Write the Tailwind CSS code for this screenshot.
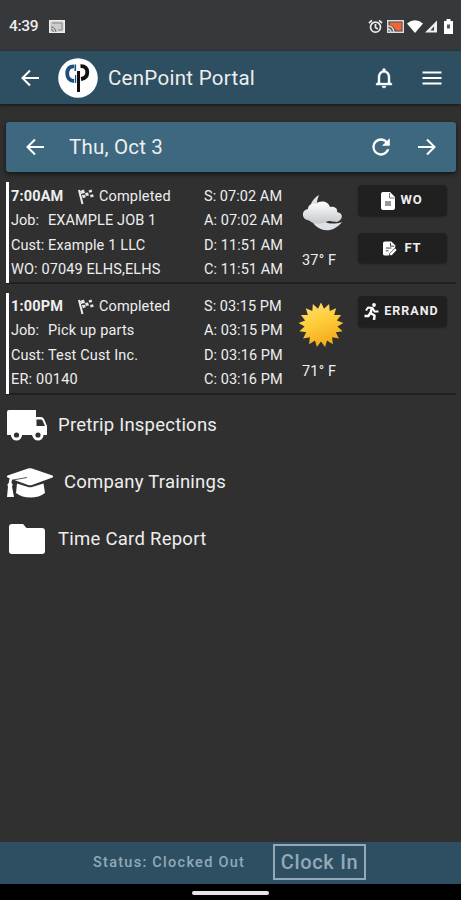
<!DOCTYPE html>
<html lang="en">

<head>
    <meta charset="UTF-8">
    <meta name="viewport" content="width=device-width, initial-scale=1.0">
    <title>CenPoint Portal</title>
    <script src="https://cdn.jsdelivr.net/npm/@tailwindcss/browser@4"></script>
</head>

<body class="bg-[#303030] font-['Roboto',sans-serif] text-[#eeeeee] h-screen flex flex-col overflow-hidden whitespace-nowrap">
    <!-- Status bar -->
    <div class="h-[51px] shrink-0 bg-[#37383c] flex items-center justify-between pl-[9px] pr-2">
        <div class="flex items-center gap-[11px] text-[15.5px] font-medium pt-[2px]">
            <span class="w-[29px] tracking-[-0.3px]">4:39</span>
            <svg class="w-4 h-[13px]" viewBox="0 0 16 13">
                <rect x=".7" y=".7" width="14.6" height="11.6" fill="#ccc" stroke="#eee" stroke-width="1.4" />
                <path d="M2 7q4 0 5 5M2 9.5q2 0 2.500 2.500" fill="none" stroke="#666" />
                <path d="M3 3h10v7H9" fill="none" stroke="#888" />
            </svg>
        </div>
        <div class="flex items-center pt-px">
            <svg class="w-[15px] h-[15px] mr-1" viewBox="0 0 15 15" fill="none" stroke="#eee" stroke-width="1.700">
                <circle cx="7.500" cy="8.200" r="5" />
                <path d="M7.500 5v3.600l2.300 1.300M1 4l3-2.600M14 4l-3-2.600" />
            </svg>
            <svg class="w-[17px] h-[13px] mr-[3px]" viewBox="0 0 17 13">
                <rect x=".7" y=".7" width="15.600" height="11.600" fill="#555" stroke="#ddd" stroke-width="1.400" />
                <path d="M3 2.500h11.500v8H9Q7 6 3 5z" fill="#f26334" />
                <path d="M1 6q5 0 6 6M1 9q2.500 0 3 3" fill="none" stroke="#ddd" stroke-width="1.400" />
            </svg>
            <svg class="w-4 h-[13px] mr-px" viewBox="0 0 16 13">
                <path d="M0 3.500Q8-3 16 3.500L8 13z" fill="#fff" />
            </svg>
            <svg class="w-[14px] h-[13px] mr-[6px]" viewBox="0 0 14 13">
                <path d="M1 12.500L13 .5v12z" fill="#eee" />
                <path d="M6.500 10.500l3.500-4v4z" fill="#37383c" />
            </svg>
            <svg class="w-[9px] h-[15px]" viewBox="0 0 9 15">
                <path d="M2.500 0h4v2H9v13H0V2h2.500z" fill="#fff" />
                <path d="M3 5.500h3v4H3z" fill="#55565a" />
            </svg>
        </div>
    </div>

    <!-- App header -->
    <header class="h-[53px] shrink-0 bg-[#2d4f61] flex items-center pl-[18px] pr-[17px] shadow-[0_1px_3px_rgba(0,0,0,.6)]">
        <svg class="w-6 h-6" viewBox="0 0 24 24" fill="none" stroke="#fff" stroke-width="2">
            <path d="M21 12H5M12 4.500L4.500 12l7.500 7.500" />
        </svg>
        <svg class="w-10 h-10 ml-[16px]" viewBox="0 0 40 40" fill="none">
            <circle cx="20" cy="20" r="19.800" fill="#fff" />
            <path d="M16 8.300C11 8.300 9.200 11.500 9.200 15.500s2.300 7.300 7 7.500" stroke="#1f4f7a" stroke-width="3.800" />
            <path d="M17.300 6.500v6.500" stroke="#1f4f7a" stroke-width="1.600" />
            <path d="M22.500 8.200c5-.2 6.800 2.500 6.800 5.800 0 4-2.300 6.500-6.300 7" stroke="#111" stroke-width="3.800" />
            <path d="M20.500 13v21" stroke="#111" stroke-width="3" />
            <path d="M17.600 17v8" stroke="#1f4f7a" stroke-width="1.200" />
        </svg>
        <h1 class="ml-[10px] mt-px text-[20.5px] leading-none tracking-[0.28px]">CenPoint Portal</h1>
        <svg class="w-6 h-6 ml-auto" viewBox="0 0 24 24" fill="#fff" stroke="#fff" stroke-width=".4">
            <path d="M12 22c1.100 0 2-.9 2-2h-4c0 1.100.9 2 2 2zm6-6v-5c0-3.070-1.630-5.640-4.500-6.320V4c0-.83-.67-1.500-1.500-1.500s-1.500.67-1.500 1.500v.68C7.640 5.360 6 7.920 6 11v5l-2 2v1h16v-1l-2-2zm-2 1H8v-6c0-2.480 1.510-4.500 4-4.500s4 2.020 4 4.500v6z" />
        </svg>
        <svg class="w-6 h-6 ml-6" viewBox="0 0 24 24" fill="none" stroke="#fff" stroke-width="2.200">
            <path d="M2.500 6.500h19M2.500 12h19M2.500 17.500h19" />
        </svg>
    </header>

    <main class="grow pt-[18px] pl-[6px] pr-[5px]">
        <!-- Day picker -->
        <div class="h-[50px] bg-[#3d687f] rounded-[3px] flex items-center pl-[17px] pr-[17px] shadow-[0_2px_4px_rgba(0,0,0,.6)]">
            <svg class="w-6 h-6" viewBox="0 0 24 24" fill="none" stroke="#fff" stroke-width="2">
                <path d="M21 12H5M12 4.500L4.500 12l7.500 7.500" />
            </svg>
            <span class="ml-[22px] text-[20.5px] tracking-[0.2px]">Thu, Oct 3</span>
            <svg class="w-6 h-6 ml-auto" viewBox="0 0 24 24" fill="#fff">
                <path d="M18 6C16.500 4.300 14.300 3.300 12 3.300a8.700 8.700 0 1 0 8.400 11H17.800A6.300 6.300 0 1 1 12 5.700c1.700 0 3.200.7 4.300 1.800L13 10.800h7.800V3.200z" />
            </svg>
            <svg class="w-6 h-6 ml-[22px]" viewBox="0 0 24 24" fill="none" stroke="#fff" stroke-width="2">
                <path d="M3 12h16M12 4.500l7.500 7.500-7.500 7.500" />
            </svg>
        </div>

        <!-- Jobs -->
        <section class="mt-[10px] h-[102px] flex border-b-2 border-[#202020] text-[14.5px] leading-[24.4px]">
            <div class="w-[3px] h-[101px] bg-white"></div>
            <div class="w-[193px] pl-[2px] pt-[3px]">
                <div class="flex items-center">
                    <b class="w-[67px] font-bold tracking-[0.15px]">7:00AM</b>
                    <svg class="w-4 h-4 mr-[5px]" viewBox="0 0 16 16" fill="none">
                        <path d="M1 1l3.500 14" stroke="#eee" stroke-width="2" />
                        <path d="M2 2l4-1.500 1 3.500-4 1zM7 4l3-.5 1 3-3 .5zM10.500 1.500l3-1 .8 2.500-3 .8zM12 6l3-.8.8 2.500-3 .8zM4 6l3-.3.800 2.500-3 1z" fill="#e6e6e6" />
                    </svg>
                    <span class="tracking-[0.15px]">Completed</span>
                </div>
                <div class="flex"><span class="w-[37px]">Job:</span><span class="tracking-[0.1px]">EXAMPLE JOB 1</span></div>
                <div class="flex"><span class="w-[37px]">Cust:</span><span class="tracking-[0.15px]">Example 1 LLC</span></div>
                <div class="tracking-[0.12px]">WO: 07049 ELHS,ELHS</div>
            </div>
            <div class="w-[95px] pl-[2px] pt-[3px] tracking-[0.05px]">
                <div>S: 07:02 AM</div>
                <div>A: 07:02 AM</div>
                <div>D: 11:51 AM</div>
                <div>C: 11:51 AM</div>
            </div>
            <div class="w-[55px] flex flex-col items-start pl-[5px] pt-[9px]">
                <svg class="w-11 h-11 -ml-[2px]" viewBox="0 0 44 44">
                    <defs>
                        <linearGradient id="moon" x1="0" y1="0" x2="0" y2="1">
                            <stop offset="0" stop-color="#fff" />
                            <stop offset="1" stop-color="#c4c8ca" />
                        </linearGradient>
                    </defs>
                    <path d="M19 4C12 8 8 16 10 25c4 15 21 20 32 6-9 3-18 2-22-5-4-8-4-15-1-22z" fill="#dfe2e4" />
                    <path d="M9 29.500C1 28.500 1 19 8 18c0-5 5-6 8-5 4-4 12-3 14 3 5-1 8 2 7 5 7 1 6 8 0 10-4 0-8-2-11 0-4 2-12 3-17-1.500z" fill="url(#moon)" />
                </svg>
                <span class="mt-[14px] tracking-[0.2px]">37° F</span>
            </div>
            <div class="w-[89px] ml-[6px] pt-[3px] flex flex-col gap-[17px] text-[13px] font-bold tracking-[0.9px]">
                <div class="h-[31px] bg-[#202020] rounded-[4px] flex items-center justify-center gap-1 pr-[2px] shadow-[0_1px_2px_rgba(0,0,0,.35)]">
                    <svg class="w-[16px] h-[18px]" viewBox="0 0 16 18">
                        <path d="M3 0h7l5 5v11q0 2-2 2H3q-2 0-2-2V2q0-2 2-2z" fill="#fff" />
                        <path d="M9.500 1v5h5" fill="none" stroke="#777" />
                        <path d="M5 9h6v5H5z" fill="#999" />
                    </svg>
                    <span>WO</span>
                </div>
                <div class="h-[30px] bg-[#202020] rounded-[4px] flex items-center justify-center gap-[7px] shadow-[0_1px_2px_rgba(0,0,0,.35)]">
                    <svg class="w-[14px] h-[15px]" viewBox="0 0 15 15">
                        <path d="M2 0h7l4 4v3L6 15H2q-2 0-2-2V2q0-2 2-2z" fill="#fff" />
                        <path d="M8 1.500V5h4M3 7h6M3 10h3" fill="none" stroke="#333" />
                        <path d="M7 13l6-6 2 2-5.500 6H7z" fill="#fff" stroke="#202020" stroke-width=".7" />
                    </svg>
                    <span>FT</span>
                </div>
            </div>
        </section>

        <section class="mt-[9px] h-[102px] flex border-b-2 border-[#202020] text-[14.5px] leading-[24.4px]">
            <div class="w-[3px] h-[101px] bg-white"></div>
            <div class="w-[193px] pl-[2px] pt-[2px]">
                <div class="flex items-center">
                    <b class="w-[67px] font-bold tracking-[0.15px]">1:00PM</b>
                    <svg class="w-4 h-4 mr-[5px]" viewBox="0 0 16 16" fill="none">
                        <path d="M1 1l3.500 14" stroke="#eee" stroke-width="2" />
                        <path d="M2 2l4-1.500 1 3.500-4 1zM7 4l3-.5 1 3-3 .5zM10.500 1.500l3-1 .8 2.500-3 .8zM12 6l3-.8.8 2.500-3 .8zM4 6l3-.3.800 2.500-3 1z" fill="#e6e6e6" />
                    </svg>
                    <span class="tracking-[0.1px]">Completed</span>
                </div>
                <div class="flex"><span class="w-[37px]">Job:</span><span class="tracking-[0.15px]">Pick up parts</span></div>
                <div class="flex"><span class="w-[37px]">Cust:</span><span class="tracking-[0.15px]">Test Cust Inc.</span></div>
                <div class="tracking-[0.2px]">ER: 00140</div>
            </div>
            <div class="w-[95px] pl-[2px] pt-[2px] tracking-[0.05px]">
                <div>S: 03:15 PM</div>
                <div>A: 03:15 PM</div>
                <div>D: 03:16 PM</div>
                <div>C: 03:16 PM</div>
            </div>
            <div class="w-[55px] flex flex-col items-start pl-[5px] pt-[9px]">
                <svg class="w-[46px] h-[46px] -ml-1" viewBox="-23 -23 46 46">
                    <defs>
                        <linearGradient id="sun" x1="0" y1="0" x2=".4" y2="1">
                            <stop offset="0" stop-color="#ffe07a" />
                            <stop offset=".5" stop-color="#ffce3c" />
                            <stop offset="1" stop-color="#f5ad1d" />
                        </linearGradient>
                    </defs>
                    <path id="sunRays" fill="url(#sun)" />
                </svg>
                <span class="mt-[12px] tracking-[0.2px]">71° F</span>
            </div>
            <div class="w-[89px] ml-[6px] pt-[3px] text-[13px] font-bold tracking-[1px]">
                <div class="h-[31px] bg-[#202020] rounded-[4px] flex items-center justify-center gap-[5px] pr-[2px] shadow-[0_1px_2px_rgba(0,0,0,.35)]">
                    <svg class="w-[15px] h-[17px]" viewBox="0 0 15 17" fill="none" stroke="#fff" stroke-width="2" stroke-linejoin="round">
                        <circle cx="10" cy="2" r="1.900" fill="#fff" stroke="none" />
                        <path d="M2 7.500l2-3 4.500.5 2 3.500h4" />
                        <path d="M8 5L6.500 10l4 2.500-.5 4.500M6.500 9.500L4.500 13H.5" stroke-width="2.500" />
                    </svg>
                    <span class="text-[12.5px]">ERRAND</span>
                </div>
            </div>
        </section>

        <!-- Links -->
        <nav class="mt-[2px] text-[18.5px] tracking-[0.22px]">
            <a class="h-[57px] flex items-center">
                <svg class="w-10 h-[31px] ml-px mr-[11px]" viewBox="0 0 40 31">
                    <path d="M2 0h27v7h5q2 0 3 2l3 7v9h-4a6 6 0 0 1-11 0H15a6 6 0 0 1-11 0H0V2q0-2 2-2z" fill="#fff" />
                    <path d="M29.500 9.500h4.500q1 0 1.500 1l2.500 5.500h-8.500z" fill="#303030" />
                    <circle cx="9.500" cy="25" r="5.500" fill="#fff" />
                    <circle cx="31" cy="25" r="5.500" fill="#fff" />
                    <circle cx="9.500" cy="25" r="2.600" fill="#303030" />
                    <circle cx="31" cy="25" r="2.600" fill="#303030" />
                </svg>
                <span>Pretrip Inspections</span>
            </a>
            <a class="h-[57px] flex items-center">
                <svg class="w-12 h-[30px] mr-[10px]" viewBox="0 0 48 30" fill="#fff">
                    <path d="M22 .6q2-.6 4 0l20.500 7q1.500.9 0 1.800L26 17q-2 .6-4 0L1.500 9.400q-1.500-.9 0-1.800z" />
                    <path d="M4 9.500l3 1Q5.500 12.500 5.500 15q2 1.500.5 3.500L8 29H1l1-10.500q-1.500-2 .8-3.500 0-3 1.200-5.500z" />
                    <path d="M11 15.500L22 19q2 .6 4 0l11.500-3.500L39 25q-6 4.500-14.500 4.500T10 25z" />
                    <path d="M7 12l14-2.500" stroke="#303030" stroke-width=".8" />
                </svg>
                <span>Company Trainings</span>
            </a>
            <a class="h-[57px] flex items-center">
                <svg class="w-9 h-[30px] ml-[3px] mr-[13px] -mt-px" viewBox="0 0 36 30" fill="#fff">
                    <path d="M3 0h11l3.500 4H33q3 0 3 3v20q0 3-3 3H3q-3 0-3-3V3q0-3 3-3z" />
                </svg>
                <span class="tracking-[0.26px]">Time Card Report</span>
            </a>
        </nav>
    </main>

    <!-- Clock bar -->
    <footer class="h-[42px] shrink-0 bg-[#2d4f61] text-[#91a9b8] font-medium flex items-center pl-[93px]">
        <span class="w-[180px] text-[14.5px] tracking-[1.27px]">Status: Clocked Out</span>
        <button class="w-[93px] h-9 border-2 border-[#91a9b8] -mt-[2px] text-[20px] leading-none tracking-[0.7px]">Clock In</button>
    </footer>
    <div class="h-4 shrink-0 bg-black flex justify-center">
        <div class="w-[77px] h-1 mt-[7px] bg-[#e8e4e8] rounded-sm"></div>
    </div>

    <script>
        // 17 rays, alternating outer and inner radius
        let d = '';
        for (let i = 0; i < 34; i++) {
            const r = i % 2 ? 16.5 : 22.5;
            const a = i * Math.PI / 17 - Math.PI / 2;
            d += (i ? 'L' : 'M') + (r * Math.cos(a)).toFixed(2) + ' ' + (r * Math.sin(a)).toFixed(2);
        }
        document.getElementById('sunRays').setAttribute('d', d + 'z');
    </script>
</body>

</html>
